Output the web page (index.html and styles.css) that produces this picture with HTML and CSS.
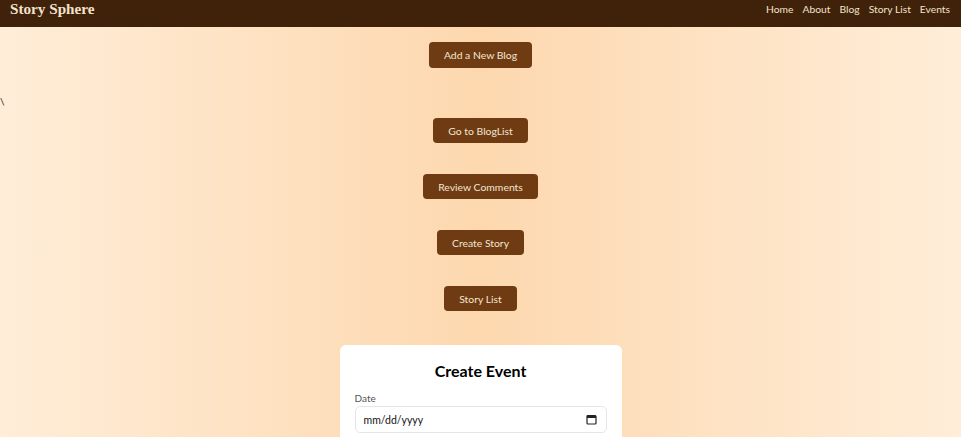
FILE: index.html
```html
<!DOCTYPE html>
<html lang="en">
<head>
<meta charset="utf-8">
<title>Story Sphere</title>
<link rel="stylesheet" href="styles.css">
</head>
<body>
<header class="navbar">
  <div class="brand">Story Sphere</div>
  <nav class="nav-links">
    <a href="#">Home</a>
    <a href="#">About</a>
    <a href="#">Blog</a>
    <a href="#">Story List</a>
    <a href="#">Events</a>
  </nav>
</header>
<main class="page">
  <div class="btn-row first"><button class="btn">Add a New Blog</button></div>
  <p class="stray">\</p>
  <div class="btn-row tight"><button class="btn">Go to BlogList</button></div>
  <div class="btn-row"><button class="btn">Review Comments</button></div>
  <div class="btn-row"><button class="btn">Create Story</button></div>
  <div class="btn-row"><button class="btn">Story List</button></div>
  <section class="card">
    <h2 class="card-title">Create Event</h2>
    <label class="field">
      <span class="field-label">Date</span>
      <span class="input date-input"><span>mm/dd/yyyy</span>
        <svg class="cal" width="11" height="11" viewBox="0 0 11 11"><rect x="1" y="1.5" width="9" height="8.5" rx="1" fill="none" stroke="#222" stroke-width="1.2"/><rect x="1" y="1.5" width="9" height="2.5" fill="#222"/></svg>
      </span>
    </label>
    <label class="field">
      <span class="field-label">Title</span>
      <span class="input"></span>
    </label>
    <label class="field">
      <span class="field-label">Description</span>
      <span class="input tall"></span>
    </label>
  </section>
</main>
</body>
</html>
```
FILE: styles.css
```css
* { box-sizing: border-box; }
html, body { margin: 0; padding: 0; }
body {
  font-family: "Lato", "Open Sans", sans-serif;
  background: linear-gradient(to right, #ffedd8 0%, #fdd8af 50%, #ffedd8 100%);
  min-height: 100vh;
  color: #222;
}
.navbar {
  height: 27px;
  background: #40210a;
  display: flex;
  align-items: center;
  justify-content: space-between;
  padding: 0 11px 0 10px;
}
.brand {
  font-family: "Liberation Serif", "DejaVu Serif", serif;
  font-weight: bold;
  font-size: 15.2px;
  color: #f3e3cb;
  margin-top: -10px;
}
.nav-links {
  display: flex;
  gap: 9px;
  margin-top: -9px;
}
.nav-links a {
  color: #f3e3cb;
  text-decoration: none;
  font-size: 10.3px;
}
.page {
  display: flex;
  flex-direction: column;
  align-items: center;
  padding-bottom: 40px;
}
.btn-row { margin-top: 31px; }
.btn-row.first { margin-top: 15px; }
.btn-row.tight { margin-top: 9px; }
.btn {
  font-family: "Lato", "Open Sans", sans-serif;
  font-size: 10.4px;
  height: 25px;
  padding: 0 15px;
  background: #6e3b12;
  color: #f5e6d2;
  border: none;
  border-radius: 4px;
}
.btn-row.first .btn { height: 26px; }
.stray {
  align-self: flex-start;
  margin: 25px 0 0;
  font-size: 10px;
  line-height: 16px;
  height: 16px;
}
.card {
  margin-top: 34px;
  width: 282px;
  background: #fff;
  border-radius: 6px;
  padding: 17px 15px 20px;
}
.card-title {
  margin: 0 0 11px;
  text-align: center;
  font-size: 16px;
  font-weight: 700;
  color: #000;
  line-height: 18px;
}
.field { display: block; margin-bottom: 10px; }
.field-label {
  display: block;
  font-size: 10px;
  color: #555;
  line-height: 14px;
  margin-bottom: 1px;
}
.input {
  display: flex;
  align-items: center;
  justify-content: space-between;
  height: 27px;
  border: 1px solid #e6e6e6;
  border-radius: 5px;
  padding: 0 9px 0 8px;
  font-size: 10.5px;
  color: #111;
}
.input.tall { height: 60px; }
.cal { display: block; }
```
